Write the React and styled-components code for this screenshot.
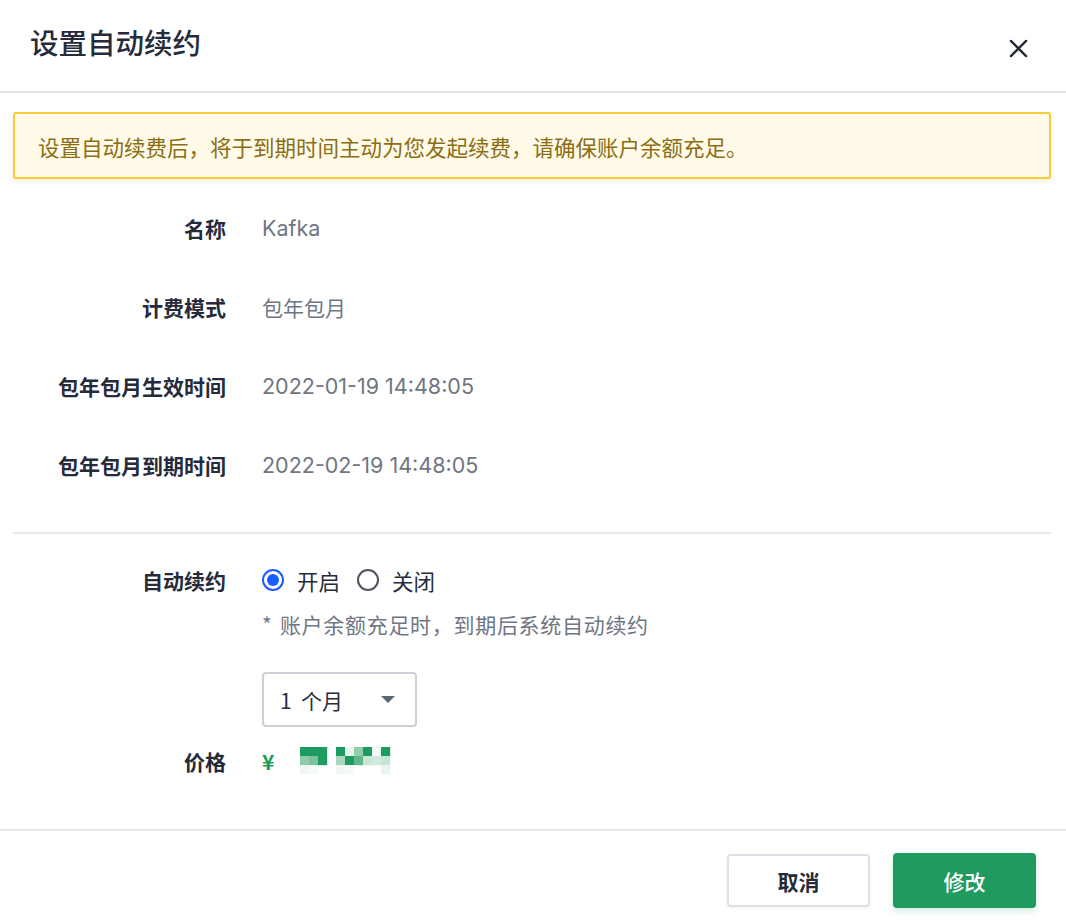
import React, { useState } from 'react';
import styled, { createGlobalStyle } from 'styled-components';

const GlobalStyle = createGlobalStyle`
  html, body {
    margin: 0;
    padding: 0;
    background: #ffffff;
  }
  body {
    font-family: "Noto Sans CJK SC", "Noto Sans", "Liberation Sans", sans-serif;
    color: #252b3a;
  }
`;

const Dialog = styled.div`
  width: 1066px;
  height: 924px;
  display: flex;
  flex-direction: column;
  background: #fff;
`;

const Header = styled.div`
  height: 93px;
  display: flex;
  justify-content: space-between;
  align-items: flex-start;
  padding: 24px 36px 0 30px;
  box-sizing: border-box;
  border-bottom: 2px solid #e3e5ea;
`;

const Title = styled.h1`
  margin: 0;
  font-size: 28.5px;
  line-height: 36px;
  font-weight: 500;
  color: #252b3a;
`;

const CloseButton = styled.button`
  border: none;
  background: none;
  padding: 0;
  margin-top: 12px;
  width: 24px;
  height: 24px;
  cursor: pointer;
  display: flex;
  align-items: center;
  justify-content: center;
`;

const Body = styled.div`
  padding: 19px 15px 0 13px;
  flex: 1;
`;

const Alert = styled.div`
  height: 67px;
  box-sizing: border-box;
  border: 2px solid #f6cc3b;
  border-radius: 3px;
  background: #fffbe8;
  box-shadow: 0 2px 4px rgba(200, 160, 40, 0.15);
  display: flex;
  align-items: center;
  padding: 1px 0 0 23px;
  font-size: 21.5px;
  color: #8c6d14;
`;

const Section = styled.div`
  display: grid;
  grid-template-columns: 213px 1fr;
  column-gap: 36px;
  padding-top: ${props => props.top || 0}px;
  padding-bottom: ${props => props.bottom || 0}px;
  border-bottom: ${props => (props.divider ? '2px solid #e6e8ec' : 'none')};
`;

const Label = styled.div`
  text-align: right;
  font-size: 21px;
  font-weight: 700;
  color: #252b3a;
  height: ${props => props.h || 79}px;
  line-height: ${props => props.h || 79}px;
  margin-top: ${props => props.mt || 0}px;
`;

const Value = styled.div`
  font-size: ${props => (props.latin ? 21.5 : 21)}px;
  color: #6f7683;
  height: ${props => props.h || 79}px;
  line-height: ${props => props.h || 79}px;
  margin-top: ${props => props.mt || 0}px;
  font-family: ${props => (props.latin ? '"Inter", "Noto Sans CJK SC", sans-serif' : 'inherit')};
  display: flex;
  align-items: center;
`;

const RadioGroup = styled.div`
  display: flex;
  align-items: center;
  height: 30px;
`;

const RadioOption = styled.label`
  display: flex;
  align-items: center;
  gap: 13px;
  margin-right: 17px;
  font-size: 21.5px;
  color: #252b3a;
  cursor: pointer;
`;

const RadioCircle = styled.span`
  width: 22px;
  height: 22px;
  box-sizing: border-box;
  border-radius: 50%;
  border: 2px solid ${props => (props.checked ? '#1a5cff' : '#4f5561')};
  display: flex;
  align-items: center;
  justify-content: center;
  &::after {
    content: '';
    width: 12px;
    height: 12px;
    border-radius: 50%;
    background: ${props => (props.checked ? '#1a5cff' : 'transparent')};
  }
`;

const Hint = styled.div`
  font-size: 21px;
  color: #6f7683;
  line-height: 30px;
  margin-top: 14px;
  word-spacing: 2px;
  letter-spacing: 0.7px;
`;

const Select = styled.div`
  margin-top: 33px;
  width: 155px;
  height: 55px;
  box-sizing: border-box;
  border: 2px solid #ccd0d7;
  border-radius: 4px;
  display: flex;
  align-items: center;
  justify-content: space-between;
  padding: 0 20px 0 16px;
  font-size: 21px;
  color: #252b3a;
`;

const Caret = styled.span`
  width: 0;
  height: 0;
  border-left: 7px solid transparent;
  border-right: 7px solid transparent;
  border-top: 7px solid #5d6573;
`;

const Price = styled.div`
  display: flex;
  align-items: center;
  gap: 26px;
  height: 30px;
  margin-top: 19px;
`;

const Yuan = styled.span`
  color: #1e9b60;
  font-weight: 700;
  font-size: 21px;
`;

const Footer = styled.div`
  border-top: 2px solid #e6e8ec;
  height: 95px;
  box-sizing: border-box;
  display: flex;
  justify-content: flex-end;
  align-items: flex-start;
  gap: 23px;
  padding: 22px 30px 0 0;
`;

const Button = styled.button`
  width: 143px;
  height: ${props => (props.primary ? 55 : 53)}px;
  margin-top: ${props => (props.primary ? 0 : 1)}px;
  box-sizing: border-box;
  border-radius: 4px;
  font-family: inherit;
  font-size: 21px;
  font-weight: ${props => (props.primary ? 500 : 700)};
  cursor: pointer;
  border: ${props => (props.primary ? 'none' : '2px solid #dde1e7')};
  background: ${props => (props.primary ? '#1f9b60' : '#fff')};
  color: ${props => (props.primary ? '#fff' : '#252b3a')};
  box-shadow: ${props => (props.primary ? '0 3px 6px rgba(31,155,96,0.2)' : '0 1px 3px rgba(0,0,0,0.06)')};
`;

const CloseIcon = () => (
  <svg width="19" height="19" viewBox="0 0 20 20">
    <path d="M2 2 L18 18 M18 2 L2 18" stroke="#252b3a" strokeWidth="2.5" strokeLinecap="round" />
  </svg>
);

// pixelated (redacted) price
const mosaic = [
  [0, 0, '#1e9b60'], [1, 0, '#1e9b60'], [2, 0, '#1e9b60'],
  [0, 1, '#8ecbaa'], [1, 1, '#7cc39c'], [2, 1, '#1e9b60'],
  [0, 2, '#f1f8f4'], [1, 2, '#f4faf6'],
  [4, 0, '#1e9b60'], [5, 0, '#e8f4ee'], [6, 0, '#8fcdab'], [7, 0, '#1e9b60'], [8, 0, '#f4faf7'], [9, 0, '#1e9b60'],
  [4, 1, '#a9d8be'], [5, 1, '#1e9b60'], [6, 1, '#62b78a'], [7, 1, '#c7e6d5'], [8, 1, '#cfeadb'], [9, 1, '#c5e6d4'],
  [4, 2, '#eef7f2'], [5, 2, '#f4faf7'], [9, 2, '#e8f4ee'],
];

const Mosaic = () => (
  <svg width="92" height="28" viewBox="0 0 92 28">
    {mosaic.map(([x, y, c], i) => (
      <rect key={i} x={x * 9} y={y * 9} width="9.2" height="9.2" fill={c} />
    ))}
  </svg>
);

export default function App() {
  const [auto, setAuto] = useState(true);
  return (
    <Dialog>
      <GlobalStyle />
      <Header>
        <Title>设置自动续约</Title>
        <CloseButton aria-label="close"><CloseIcon /></CloseButton>
      </Header>
      <Body>
        <Alert>设置自动续费后，将于到期时间主动为您发起续费，请确保账户余额充足。</Alert>
        <Section top={10} bottom={27} divider>
          <Label>名称</Label>
          <Value latin>Kafka</Value>
          <Label>计费模式</Label>
          <Value>包年包月</Value>
          <Label>包年包月生效时间</Label>
          <Value latin>2022-01-19 14:48:05</Value>
          <Label>包年包月到期时间</Label>
          <Value latin>2022-02-19 14:48:05</Value>
        </Section>
        <Section top={31}>
          <Label h={30}>自动续约</Label>
          <div>
            <RadioGroup>
              <RadioOption onClick={() => setAuto(true)}>
                <RadioCircle checked={auto} />开启
              </RadioOption>
              <RadioOption onClick={() => setAuto(false)}>
                <RadioCircle checked={!auto} />关闭
              </RadioOption>
            </RadioGroup>
            <Hint>* 账户余额充足时，到期后系统自动续约</Hint>
            <Select>
              <span>1&nbsp;&nbsp;个月</span>
              <Caret />
            </Select>
          </div>
          <Label h={30} mt={19}>价格</Label>
          <Price>
            <Yuan>¥</Yuan>
            <Mosaic />
          </Price>
        </Section>
      </Body>
      <Footer>
        <Button>取消</Button>
        <Button primary>修改</Button>
      </Footer>
    </Dialog>
  );
}
